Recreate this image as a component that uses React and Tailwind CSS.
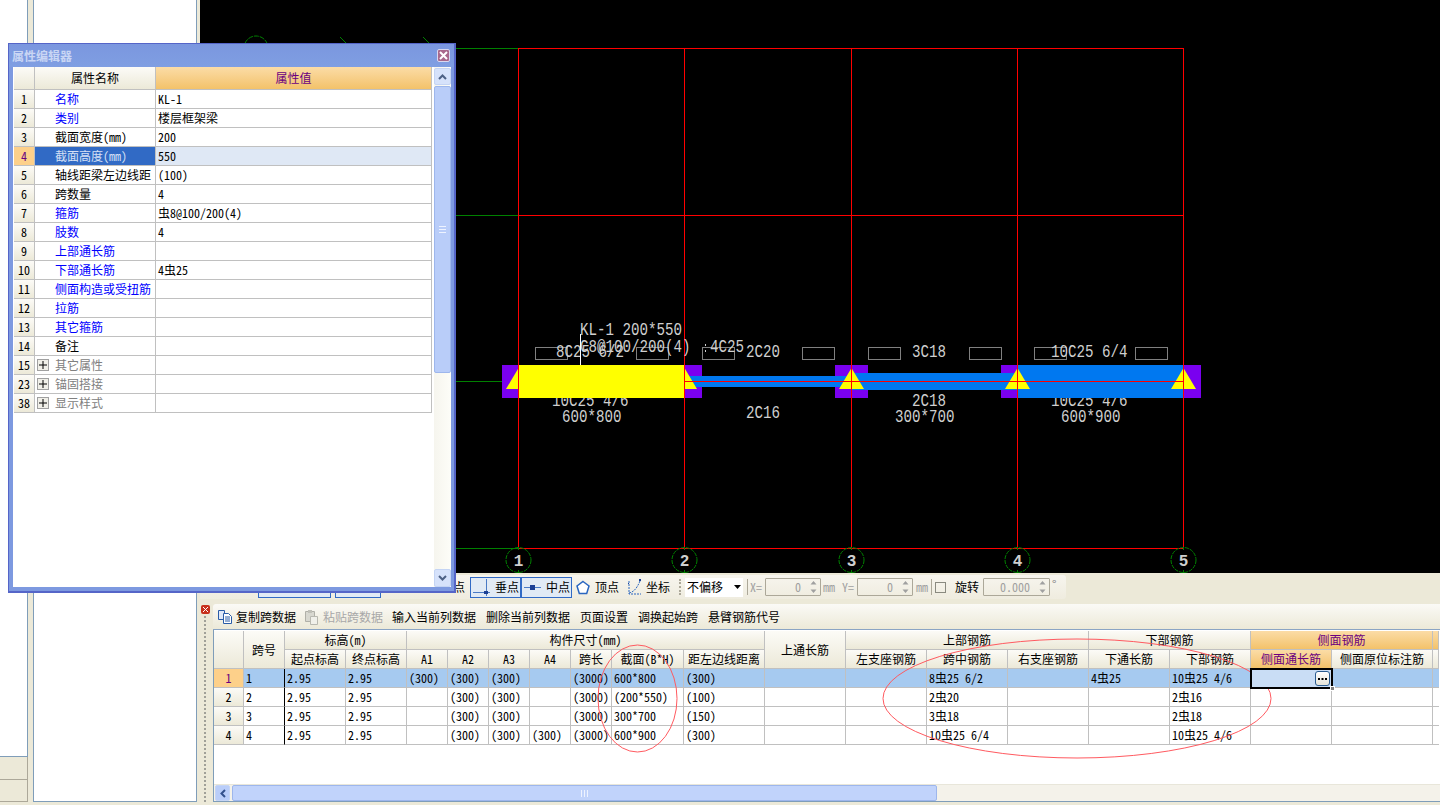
import React from 'react';

const headCell = 'flex items-center justify-center border-r border-b border-[#c0c0c0] bg-linear-to-b from-[#fcfbf7] to-[#ece9d8] text-black whitespace-nowrap';
const orangeCell = 'flex items-center justify-center border-r border-b border-[#c0c0c0] bg-linear-to-b from-[#fbdca6] to-[#f3c269] text-[#6a0080] whitespace-nowrap';

const props = [
  ['1', '名称', 'KL-1', 'blue'],
  ['2', '类别', '楼层框架梁', 'blue'],
  ['3', '截面宽度(mm)', '200', 'black'],
  ['4', '截面高度(mm)', '550', 'active'],
  ['5', '轴线距梁左边线距', '(100)', 'black'],
  ['6', '跨数量', '4', 'black'],
  ['7', '箍筋', '虫8@100/200(4)', 'blue'],
  ['8', '肢数', '4', 'blue'],
  ['9', '上部通长筋', '', 'blue'],
  ['10', '下部通长筋', '4虫25', 'blue'],
  ['11', '侧面构造或受扭筋', '', 'blue'],
  ['12', '拉筋', '', 'blue'],
  ['13', '其它箍筋', '', 'blue'],
  ['14', '备注', '', 'black'],
  ['15', '其它属性', '', 'group'],
  ['23', '锚固搭接', '', 'group'],
  ['38', '显示样式', '', 'group'],
];

const spans = [
  ['1', '1', '2.95', '2.95', '(300)', '(300)', '(300)', '', '(3000)', '600*800', '(300)', '', '', '8虫25 6/2', '', '4虫25', '10虫25 4/6'],
  ['2', '2', '2.95', '2.95', '', '(300)', '(300)', '', '(3000)', '(200*550)', '(100)', '', '', '2虫20', '', '', '2虫16'],
  ['3', '3', '2.95', '2.95', '', '(300)', '(300)', '', '(3000)', '300*700', '(150)', '', '', '3虫18', '', '', '2虫18'],
  ['4', '4', '2.95', '2.95', '', '(300)', '(300)', '(300)', '(3000)', '600*900', '(300)', '', '', '10虫25 6/4', '', '', '10虫25 4/6'],
];

const subHeads = ['起点标高', '终点标高', 'A1', 'A2', 'A3', 'A4', '跨长', '截面(B*H)', '距左边线距离'];
const subHeads2 = ['左支座钢筋', '跨中钢筋', '右支座钢筋', '下通长筋', '下部钢筋'];

const CloseBox = () => (
  <div className="w-[13px] h-[13px] rounded-[2px] border border-[#d8d8f0] bg-[#a8688c] flex items-center justify-center">
    <svg width="9" height="9" viewBox="0 0 9 9"><path d="M1 1l7 7M8 1l-7 7" stroke="#fff" strokeWidth="2" /></svg>
  </div>
);

const GripV = () => (
  <svg width="7" height="7" viewBox="0 0 7 7"><path d="M0 .5h7M0 3.5h7M0 6.5h7" stroke="#eef3ff" /></svg>
);

const GripH = () => (
  <svg width="7" height="7" viewBox="0 0 7 7"><path d="M.5 0v7M3.5 0v7M6.5 0v7" stroke="#eef3ff" /></svg>
);

function PropertyWindow() {
  return (
    <div className="absolute left-[8px] top-[43px] w-[448px] h-[550px] flex flex-col border-t border-r-[2px] border-b-[2px] border-l border-[#5565c8] bg-[#7d99e0]">
      <div className="h-[23px] shrink-0 flex items-center justify-between pl-[3px] pr-[4px] bg-linear-to-b from-[#7b97df] to-[#7f9ee2]">
        <span className="text-[12px] font-bold text-[#c9d6f4]">属性编辑器</span>
        <CloseBox />
      </div>
      <div className="flex-1 ml-[4px] mr-[3px] mb-[4px] bg-white flex min-h-0">
        <div className="w-[418px] ml-px shrink-0">
          <div className="flex h-[23px] border-b border-[#c0c0c0]">
            <div className="w-[21px] shrink-0 border-r border-[#c0c0c0] bg-linear-to-b from-[#fcfbf7] to-[#ece9d8]" />
            <div className="w-[121px] shrink-0 flex items-center justify-center border-r border-[#c0c0c0] bg-linear-to-b from-[#fcfbf7] to-[#ece9d8]">属性名称</div>
            <div className="flex-1 flex items-center justify-center border-r border-[#c0c0c0] bg-linear-to-b from-[#fbdca6] to-[#f3c269] text-[#6a0080]">属性值</div>
          </div>
          {props.map(([num, name, value, kind]) => {
            const active = kind === 'active';
            const nameColor = active ? 'text-[#d5e0f5] bg-[#316ac5]' : kind === 'blue' ? 'text-[#0000ff]' : kind === 'group' ? 'text-[#808080]' : 'text-black';
            return (
              <div key={num} className="flex h-[19px] border-b border-[#c0c0c0]">
                <div className={`w-[21px] shrink-0 flex items-center justify-center border-r border-[#c0c0c0] ${active ? 'bg-[#fdd08a] text-[#6a0080]' : 'bg-linear-to-b from-[#fcfbf7] to-[#ece9d8]'}`}>{num}</div>
                <div className={`w-[121px] shrink-0 flex items-center border-r border-[#c0c0c0] whitespace-nowrap ${kind === 'group' ? 'pl-[2px]' : 'pl-[20px]'} ${nameColor}`}>
                  {kind === 'group' && (
                    <span className="w-[12px] h-[12px] mr-[6px] border border-[#a0a0a0] bg-[#f0efe8] flex items-center justify-center">
                      <svg width="8" height="8" viewBox="0 0 8 8"><path d="M4 0v8M0 4h8" stroke="#000" /></svg>
                    </span>
                  )}
                  {name}
                </div>
                <div className={`flex-1 flex items-center pl-[2px] border-r border-[#c0c0c0] whitespace-pre ${active ? 'bg-[#dfe8f5]' : ''}`}>{value}</div>
              </div>
            );
          })}
        </div>
        <div className="w-[17px] ml-[2px] shrink-0 flex flex-col bg-linear-to-r from-[#f6f5ee] to-[#fdfdf8]">
          <div className="h-[17px] mt-[1px] shrink-0 rounded-[2px] border border-[#c4d4f4] bg-[#d6e2fb] flex items-center justify-center">
            <svg width="9" height="6" viewBox="0 0 9 6"><path d="M1 5l3.5-3.5L8 5" fill="none" stroke="#4d6185" strokeWidth="2" /></svg>
          </div>
          <div className="h-[287px] mt-[1px] shrink-0 rounded-[2px] border border-[#9db6ec] bg-[#b9cdf9] flex items-center justify-center">
            <GripV />
          </div>
          <div className="flex-1" />
          <div className="h-[18px] shrink-0 rounded-[2px] border border-[#c4d4f4] bg-[#d6e2fb] flex items-center justify-center">
            <svg width="9" height="6" viewBox="0 0 9 6"><path d="M1 1l3.5 3.5L8 1" fill="none" stroke="#4d6185" strokeWidth="2" /></svg>
          </div>
        </div>
      </div>
    </div>
  );
}

function CadCanvas() {
  const gridX = [518.5, 684.5, 851.5, 1017.5, 1183.5];
  const slots = [535, 636, 702, 802, 868, 969, 1034, 1135];
  const labels = [
    ['KL-1 200*550', 580, 335], ['C8@100/200(4)', 580, 352], ['8C25 6/2', 556, 357], ['4C25', 710, 352],
    ['2C20', 746, 357], ['10C25 4/6', 552, 406], ['600*800', 562, 422], ['2C16', 746, 418],
    ['3C18', 912, 357], ['2C18', 912, 406], ['300*700', 895, 422], ['10C25 6/4', 1051, 357],
    ['10C25 4/6', 1051, 406], ['600*900', 1061, 422],
  ];
  return (
    <div className="h-[573px] shrink-0 bg-black overflow-hidden">
      <svg className="block w-full h-full font-['Liberation_Mono']" viewBox="200 0 1240 573">
        <g stroke="#008000" fill="none">
          <circle cx="256" cy="48" r="12" strokeDasharray="5 1" />
          <path d="M340 37l8 8M423 37l8 8" />
          <path d="M200 48.5h318M200 215.5h318M200 381.5h318M200 548.5h318" shapeRendering="crispEdges" />
        </g>
        <g stroke="#ff0000" fill="none" shapeRendering="crispEdges">
          <path d="M518.5 48.5h665M518.5 215.5h665M518.5 381.5h665M518.5 548.5h665" />
          {gridX.map((x) => <path key={x} d={`M${x} 48v500`} />)}
        </g>
        {gridX.map((x, i) => (
          <g key={x}>
            <circle cx={x} cy="560" r="12.5" fill="none" stroke="#008000" strokeDasharray="4 1" />
            <path d={`M${x} 547v3M${x} 570v3`} stroke="#008000" />
            <text x={x} y="566" textAnchor="middle" fontSize="16" fontWeight="bold" fill="#cfcfcf">{i + 1}</text>
          </g>
        ))}
        <g fill="none" stroke="#808080" shapeRendering="crispEdges">
          {slots.map((x) => <rect key={x} x={x + 0.5} y="347.5" width="32" height="12" />)}
        </g>
        <g fontSize="18" fill="#cfcfcf">
          {labels.map(([t, x, y]) => (
            <text key={`${t}${x}`} x={x} y={y} xmlSpace="preserve" textLength={t.length * 8.5} lengthAdjust="spacingAndGlyphs">{t}</text>
          ))}
        </g>
        <path d="M580.5 334v31" stroke="#fff" />
        <path d="M705.5 344v2M705.5 350v2" stroke="#cfcfcf" />
        <g shapeRendering="crispEdges">
          <rect x="502" y="365" width="33" height="33" fill="#7a00f0" />
          <rect x="668" y="365" width="34" height="33" fill="#7a00f0" />
          <rect x="835" y="365" width="33" height="33" fill="#7a00f0" />
          <rect x="1001" y="365" width="33" height="33" fill="#7a00f0" />
          <rect x="1167" y="365" width="34" height="33" fill="#7a00f0" />
          <rect x="685" y="376" width="166" height="11" fill="#0078f0" />
          <rect x="851" y="373" width="166" height="17" fill="#0078f0" />
          <rect x="1018" y="365" width="165" height="33" fill="#0078f0" />
        </g>
        <path d="M518.5 381.5H1183.5" stroke="#ff0000" shapeRendering="crispEdges" />
        {gridX.map((x) => <path key={x} d={`M${x - 12.5} 389L${x} 368L${x + 12.5} 389Z`} fill="#ffff00" />)}
        <rect x="518" y="365" width="167" height="33" fill="#ffff00" shapeRendering="crispEdges" />
        <g stroke="#ff0000" fill="none" shapeRendering="crispEdges">
          {gridX.map((x) => <path key={x} d={`M${x} 360v40`} />)}
          <path d="M685 381.5H1183.5" />
        </g>
      </svg>
    </div>
  );
}

const NumBox = ({ w, value }) => (
  <div className={`${w} h-[18px] shrink-0 flex items-center justify-end pr-[3px] border border-[#aca899] text-[#a0a0a0] rounded-[1px] gap-[9px]`}>
    <span>{value}</span>
    <svg width="7" height="14" viewBox="0 0 7 14"><path d="M3.5 1L6.5 4.5H.5zM3.5 13L.5 9.5h6z" fill="#a0a0a0" /></svg>
  </div>
);

function SnapBar() {
  return (
    <div className="h-[31px] shrink-0 pt-[2px] bg-[#ece9d8]">
      <div className="w-[866px] h-[24px] flex items-center rounded-r-[3px] bg-linear-to-b from-[#f7f5ee] to-[#efecdf] whitespace-nowrap">
        <div className="ml-[58px] w-[73px] h-[22px] shrink-0 border border-[#316ac5] bg-[#e1eaf5]" />
        <div className="ml-[4px] w-[46px] h-[22px] shrink-0 border border-[#316ac5] bg-[#e1eaf5]" />
        <span className="ml-[72px] w-[12px] shrink-0">点</span>
        <div className="ml-[5px] w-[51px] h-[21px] shrink-0 flex items-center gap-[4px] pl-[2px] border border-[#316ac5] bg-[#e1eaf5]">
          <svg width="18" height="17" viewBox="0 0 18 17"><path d="M0 13.5h17" stroke="#4a7ac5" /><path d="M13.5 0v17" stroke="#4a7ac5" /><rect x="11" y="12" width="4" height="3" fill="#1c3f94" /></svg>
          <span>垂点</span>
        </div>
        <div className="w-[51px] h-[21px] shrink-0 flex items-center gap-[4px] pl-[2px] border border-[#316ac5] bg-[#e1eaf5]">
          <svg width="18" height="9" viewBox="0 0 18 9"><path d="M0 4.5h17" stroke="#4a7ac5" /><rect x="6" y="2" width="5" height="5" fill="#1c3f94" /></svg>
          <span>中点</span>
        </div>
        <svg className="ml-[4px] shrink-0" width="14" height="15" viewBox="0 0 14 15"><path d="M7 1.5L13 6l-2.3 7.5H3.3L1 6z" fill="#fff" stroke="#2a66c0" strokeWidth="1.5" /></svg>
        <span className="ml-[5px] w-[24px] shrink-0">顶点</span>
        <svg className="ml-[8px] shrink-0" width="15" height="17" viewBox="0 0 15 17"><path d="M2 2v13h12" fill="none" stroke="#2a66c0" strokeDasharray="2 1" /><path d="M2 14C7 13 10 9 13 2" fill="none" stroke="#2a66c0" strokeDasharray="2 1" /><path d="M12 0l2 2M14 0l-2 2M1 4l1 1" stroke="#1c3f94" /></svg>
        <span className="ml-[4px] w-[24px] shrink-0">坐标</span>
        <div className="ml-[9px] w-[3px] h-[16px] shrink-0 border-l-2 border-dotted border-[#aca899]" />
        <div className="ml-[3px] w-[58px] h-[19px] shrink-0 flex items-center justify-between pl-[2px] pr-[2px] bg-white">
          <span>不偏移</span>
          <svg width="7" height="4" viewBox="0 0 7 4"><path d="M0 0h7L3.5 4z" fill="#000" /></svg>
        </div>
        <div className="ml-[4px] w-px h-[16px] shrink-0 bg-[#aca899]" />
        <span className="ml-[2px] w-[12px] shrink-0 text-[#a0a0a0]">X=</span>
        <div className="ml-[3px] flex shrink-0"><NumBox w="w-[56px]" value="0" /></div>
        <span className="ml-[2px] w-[12px] shrink-0 text-[#a0a0a0]">mm</span>
        <span className="ml-[7px] w-[12px] shrink-0 text-[#a0a0a0]">Y=</span>
        <div className="ml-[3px] flex shrink-0"><NumBox w="w-[56px]" value="0" /></div>
        <span className="ml-[3px] w-[12px] shrink-0 text-[#a0a0a0]">mm</span>
        <div className="ml-[3px] w-px h-[16px] shrink-0 bg-[#aca899]" />
        <div className="ml-[3px] w-[11px] h-[11px] shrink-0 border border-[#8a8a80]" />
        <span className="ml-[9px] w-[24px] shrink-0">旋转</span>
        <div className="ml-[4px] flex shrink-0"><NumBox w="w-[67px]" value="0.000" /></div>
        <span className="ml-[2px] shrink-0 text-[#808080] -mt-[6px]">°</span>
      </div>
    </div>
  );
}

function DataToolbar() {
  return (
    <div className="h-[26px] shrink-0 flex items-center rounded-tl-[3px] bg-linear-to-b from-[#fbfaf6] to-[#ece9d8] whitespace-nowrap border-b border-[#8aa4c4]">
      <svg className="ml-[4px] shrink-0" width="16" height="15" viewBox="0 0 16 15">
        <path d="M1.5 1.5h6v9h-6z" fill="#dfe8f8" stroke="#2a5ca8" />
        <path d="M6.5 4.5h5l3 3v7h-8z" fill="#fff" stroke="#2a5ca8" />
        <path d="M8 8h5M8 10h5M8 12h5" stroke="#2a5ca8" />
      </svg>
      <span className="ml-[3px] shrink-0">复制跨数据</span>
      <svg className="ml-[7px] shrink-0" width="16" height="16" viewBox="0 0 16 16">
        <path d="M2.5 2.5h9v10h-9z" fill="#d8d8d0" stroke="#b0b0a8" />
        <path d="M5 1h4v3H5z" fill="#c0c0b8" />
        <path d="M7.5 7.5h7v8h-7z" fill="#f0f0ea" stroke="#b8b8b0" />
      </svg>
      <span className="ml-[4px] shrink-0 text-[#a8a8a8]">粘贴跨数据</span>
      <span className="ml-[9px] shrink-0">输入当前列数据</span>
      <span className="ml-[10px] shrink-0">删除当前列数据</span>
      <span className="ml-[10px] shrink-0">页面设置</span>
      <span className="ml-[10px] shrink-0">调换起始跨</span>
      <span className="ml-[10px] shrink-0">悬臂钢筋代号</span>
    </div>
  );
}

function SpanGrid() {
  return (
    <div className="grid grid-cols-[30px_41px_61px_61px_41px_41px_41px_41px_41px_72px_81px_81px_81px_81px_81px_81px_81px_81px_101px_6px] grid-rows-[19px_19px_19px_19px_19px_19px]">
      <div className={`${headCell} row-span-2`} />
      <div className={`${headCell} row-span-2`}>跨号</div>
      <div className={`${headCell} col-span-2`}>标高(m)</div>
      <div className={`${headCell} col-span-7`}>构件尺寸(mm)</div>
      <div className={`${headCell} row-span-2`}>上通长筋</div>
      <div className={`${headCell} col-span-3`}>上部钢筋</div>
      <div className={`${headCell} col-span-2`}>下部钢筋</div>
      <div className={`${orangeCell} col-span-2`}>侧面钢筋</div>
      <div className={orangeCell} />
      {subHeads.map((h) => <div key={h} className={headCell}>{h}</div>)}
      {subHeads2.map((h) => <div key={h} className={headCell}>{h}</div>)}
      <div className={orangeCell}>侧面通长筋</div>
      <div className={headCell}>侧面原位标注筋</div>
      <div className={headCell} />
      {spans.map((row, r) => {
        const selected = r === 0;
        return (
          <React.Fragment key={row[0]}>
            <div className={`flex items-center justify-center border-r border-b border-[#c0c0c0] ${selected ? 'bg-[#fdd08a] text-[#6a0080]' : 'bg-linear-to-b from-[#fcfbf7] to-[#ece9d8]'}`}>{row[0]}</div>
            {row.slice(1).map((v, c) => (
              <div key={c} className={`flex items-center pl-[2px] border-b border-b-[#c0c0c0] border-r whitespace-pre ${c === 0 ? 'border-r-black' : 'border-r-[#c0c0c0]'} ${selected ? 'bg-[#a6caf0]' : ''}`}>{v}</div>
            ))}
            {selected ? (
              <div className="relative z-10 -m-px flex items-center justify-end pr-[1px] border-2 border-black bg-[#c9ddf5]">
                <div className="w-[15px] h-[15px] rounded-[3px] border border-[#2a5c90] bg-linear-to-b from-white to-[#e6e4d8] flex items-center justify-center">
                  <svg width="9" height="2" viewBox="0 0 9 2"><path d="M0 0h2v2H0zM3.5 0h2v2h-2zM7 0h2v2H7z" fill="#000" /></svg>
                </div>
                <div className="absolute -right-[4px] -bottom-[4px] w-[5px] h-[5px] bg-[#808080] border border-white" />
              </div>
            ) : (
              <div className="border-r border-b border-[#c0c0c0]" />
            )}
            <div className={`border-r border-b border-[#c0c0c0] ${selected ? 'bg-[#a6caf0]' : ''}`} />
            <div className={`border-b border-[#c0c0c0] ${selected ? 'bg-[#a6caf0]' : ''}`} />
          </React.Fragment>
        );
      })}
    </div>
  );
}

function BottomPanel() {
  return (
    <div className="flex-1 flex min-h-0 pb-[3px]">
      <div className="w-[13px] shrink-0 flex flex-col items-center pt-[1px] pr-[3px]">
        <div className="w-[9px] h-[9px] rounded-[2px] bg-[#c8301c] flex items-center justify-center">
          <svg width="5" height="5" viewBox="0 0 5 5"><path d="M0 0l5 5M5 0L0 5" stroke="#fff" /></svg>
        </div>
        <div className="flex-1 mt-[2px] w-[2px] border-l-2 border-dotted border-[#a0a098]" />
      </div>
      <div className="flex-1 min-w-0 flex flex-col">
        <DataToolbar />
        <div className="flex-1 flex flex-col min-h-0 border-b border-l border-[#7f9db9] bg-white pt-px">
          <SpanGrid />
          <div className="flex-1" />
          <div className="h-[17px] shrink-0 flex border-t border-[#e8e6da] bg-[#f4f2ea]">
            <div className="w-[15px] ml-px shrink-0 rounded-[2px] border border-[#c4d4f4] bg-[#b9cdf9] flex items-center justify-center">
              <svg width="6" height="9" viewBox="0 0 6 9"><path d="M5 1L1.5 4.5 5 8" fill="none" stroke="#32508c" strokeWidth="2" /></svg>
            </div>
            <div className="ml-[2px] w-[705px] shrink-0 rounded-[2px] border border-[#9db6ec] bg-[#c1d3fb] flex items-center justify-center">
              <GripH />
            </div>
          </div>
        </div>
      </div>
    </div>
  );
}

export default function App() {
  return (
    <div className="relative w-[1440px] h-[805px] overflow-hidden flex bg-[#ece9d8] text-[12px] leading-none text-black font-['Noto_Sans_Mono_CJK_SC','Noto_Sans_CJK_SC',monospace]">
      {/* left dock */}
      <div className="w-[28px] shrink-0 flex flex-col h-[802px]">
        <div className="flex-1 bg-white border-r border-b border-[#7f9db9]" />
        <div className="h-[23px] shrink-0 border-r border-b border-[#aca899]" />
        <div className="h-[22px] shrink-0 border-r border-b border-[#aca899]" />
      </div>
      <div className="ml-[5px] w-[164px] h-[802px] shrink-0 bg-white border-x border-b border-[#7f9db9]" />
      <div className="ml-[3px] flex-1 min-w-0 flex flex-col">
        <CadCanvas />
        <SnapBar />
        <BottomPanel />
      </div>
      <PropertyWindow />
      <svg className="absolute inset-0 pointer-events-none" width="1440" height="805" viewBox="0 0 1440 805" fill="none" stroke="#ff5a60">
        <ellipse cx="637.5" cy="698.5" rx="39.5" ry="53.5" />
        <ellipse cx="1077" cy="698.5" rx="194" ry="59.5" />
      </svg>
    </div>
  );
}
